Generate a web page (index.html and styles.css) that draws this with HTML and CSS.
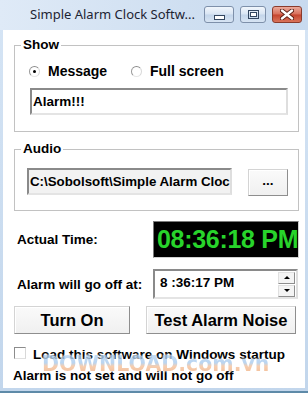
FILE: index.html
```html
<!DOCTYPE html>
<html>
<head>
<meta charset="utf-8">
<link rel="stylesheet" href="styles.css">
</head>
<body>
<div class="window">
  <div class="titlebar">
    <span class="title">Simple Alarm Clock Softw...</span>
    <div class="caption-btns">
      <span class="cbtn min"><svg width="11" height="5" viewBox="0 0 11 5"><rect x="0.5" y="0.5" width="10" height="4" fill="#fff" stroke="#33465f"/></svg></span>
      <span class="cbtn max"><svg width="11" height="9" viewBox="0 0 11 9"><rect x="0.5" y="0.5" width="10" height="8" fill="none" stroke="#33465f"/><rect x="2.5" y="2.5" width="6" height="4" fill="#fff" stroke="#33465f"/></svg></span>
      <span class="cbtn close"><svg width="14" height="11" viewBox="0 0 14 11"><path d="M2 1.5 L12 9.5 M12 1.5 L2 9.5" stroke="#5a1d12" stroke-width="4.2" stroke-linecap="round"/><path d="M2 1.5 L12 9.5 M12 1.5 L2 9.5" stroke="#fff" stroke-width="2.4" stroke-linecap="round"/></svg></span>
    </div>
  </div>
  <div class="client">
    <fieldset class="group show">
      <legend>Show</legend>
      <div class="group-body show-body">
        <div class="radios">
          <label class="radio first"><span class="dot on"></span>Message</label>
          <label class="radio"><span class="dot"></span>Full screen</label>
        </div>
        <div class="textbox msg">Alarm!!!</div>
      </div>
    </fieldset>
    <fieldset class="group audio">
      <legend>Audio</legend>
      <div class="group-body audio-body">
        <div class="textbox path">C:\Sobolsoft\Simple Alarm Cloc</div>
        <button class="btn browse">...</button>
      </div>
    </fieldset>
    <div class="time-row actual">
      <span class="label">Actual Time:</span>
      <div class="clock">08:36:18 PM</div>
    </div>
    <div class="time-row alarm">
      <span class="label">Alarm will go off at:</span>
      <div class="picker">
        <span class="ptext">8 :36:17 PM</span>
        <div class="spin">
          <span class="sbtn"><span class="tri up"></span></span>
          <span class="sbtn"><span class="tri down"></span></span>
        </div>
      </div>
    </div>
    <div class="btn-row">
      <button class="btn big turn">Turn On</button>
      <button class="btn big test">Test Alarm Noise</button>
    </div>
    <label class="check"><span class="box"></span>Load this software on Windows startup</label>
    <div class="status">Alarm is not set and will not go off</div>
    <div class="watermark">DOWNLOAD.com.vn</div>
  </div>
</div>
</body>
</html>
```

FILE: styles.css
```css
* { box-sizing: border-box; }
html, body { margin: 0; padding: 0; }
body {
  width: 308px;
  height: 393px;
  overflow: hidden;
  font-family: "Liberation Sans", Arial, sans-serif;
  font-weight: bold;
  font-size: 13.5px;
  color: #000;
}
.window {
  width: 308px;
  height: 393px;
  display: flex;
  flex-direction: column;
  background: linear-gradient(#d6e5f5, #c2d6ec);
  border-bottom: 2px solid #5e8aa8;
}
.titlebar {
  height: 30px;
  flex: none;
  display: flex;
  align-items: center;
  background: linear-gradient(90deg, #dfeaf7, #cfdff1 60%, #c8daef);
}
.title {
  font-family: "Noto Sans", "Open Sans", sans-serif;
  font-weight: normal;
  font-size: 13px;
  color: #1d2433;
  padding-left: 30px;
  padding-bottom: 2px;
}
.caption-btns {
  margin-left: auto;
  margin-right: 6px;
  display: flex;
  gap: 6px;
  align-self: flex-start;
  margin-top: 6px;
}
.cbtn {
  height: 17px;
  width: 30px;
  border: 1px solid #7e90aa;
  border-radius: 3px;
  display: flex;
  align-items: center;
  justify-content: center;
  background: linear-gradient(#f1f6fc, #d9e5f3 48%, #c3d5ea 52%, #d7e4f3);
}
.cbtn.min svg { margin-top: 6px; }
.cbtn.max { width: 26px; }
.cbtn.close {
  border-color: #8a3b2c;
  background: linear-gradient(#eba99a, #d86f5b 48%, #c5442e 52%, #d9735a);
}
.client {
  flex: 1;
  position: relative;
  background: #fff;
  margin: 0 3px 3px 3px;
  display: flex;
  flex-direction: column;
  overflow: hidden;
}
.group {
  margin: 0 6px 0 11px;
  padding: 0;
  border: 1px solid #c2c2c2;
  min-width: 0;
}
.group legend {
  margin-left: 6px;
  padding: 0 2px;
  line-height: 16px;
  font-size: 13.5px;
}
.show { margin-top: 7px; }
.audio { margin-top: 9px; }
.show-body { padding: 10px 10px 16px 14px; }
.radios {
  display: flex;
  align-items: center;
  height: 16px;
}
.radio {
  display: flex;
  align-items: center;
  gap: 8px;
  font-size: 14px;
}
.radio.first { width: 102px; }
.dot {
  width: 11px;
  height: 11px;
  border-radius: 50%;
  border: 1px solid;
  border-color: #8c8c8c #d8d8d8 #e6e6e6 #9a9a9a;
  background: #fff;
  position: relative;
  flex: none;
}
.dot.on::after {
  content: "";
  position: absolute;
  left: 3px;
  top: 3px;
  width: 3px;
  height: 3px;
  border-radius: 50%;
  background: #000;
}
.textbox {
  height: 27px;
  border: 2px solid;
  border-color: #8a8a8a #dedede #e4e4e4 #8a8a8a;
  display: flex;
  align-items: center;
  padding-left: 1px;
  white-space: nowrap;
  overflow: hidden;
}
.msg {
  margin-top: 9px;
  margin-left: 1px;
  background: #fff;
}
.audio-body {
  padding: 11px 10px 14px 12px;
  display: flex;
  align-items: flex-start;
}
.path {
  width: 205px;
  background: #f2f2f2;
  flex: none;
  font-size: 13.3px;
}
.btn {
  font-family: inherit;
  font-weight: bold;
  color: #000;
  padding: 0;
  margin: 0;
  background: linear-gradient(#fafafa, #f0f0f0);
  border: 1px solid;
  border-color: #d4d4d4 #8e8e8e #8e8e8e #d4d4d4;
  box-shadow: inset 1px 1px 0 #fff;
}
.browse {
  width: 40px;
  height: 27px;
  margin-left: 16px;
  margin-top: 1px;
  font-size: 13.5px;
  padding-bottom: 4px;
}
.time-row {
  display: flex;
  align-items: center;
  padding-left: 14px;
}
.actual { margin-top: 10px; height: 37px; margin-right: 6px; }
.alarm { margin-top: 11px; height: 30px; margin-right: 7px; }
.label { font-size: 13.5px; }
.clock {
  margin-left: auto;
  width: 146px;
  height: 37px;
  background: #000;
  border: 1px solid;
  border-color: #7a7a7a #d0d0d0 #d0d0d0 #7a7a7a;
  color: #28d42b;
  font-size: 25px;
  display: flex;
  align-items: center;
  padding-left: 3px;
  white-space: nowrap;
  letter-spacing: -0.3px;
}
.picker {
  margin-left: auto;
  width: 145px;
  height: 30px;
  border: 2px solid;
  border-color: #8a8a8a #dedede #e4e4e4 #8a8a8a;
  display: flex;
  align-items: center;
  padding-left: 5px;
}
.ptext { flex: 1; padding-bottom: 3px; }
.spin {
  display: flex;
  flex-direction: column;
  gap: 1px;
  margin-right: 1px;
}
.sbtn {
  width: 17px;
  height: 12px;
  border: 1px solid;
  border-color: #e0e0e0 #8e8e8e #8e8e8e #e0e0e0;
  background: #f4f4f4;
  display: flex;
  align-items: center;
  justify-content: center;
}
.tri {
  width: 0;
  height: 0;
  border-left: 3px solid transparent;
  border-right: 3px solid transparent;
}
.tri.up { border-bottom: 3px solid #000; }
.tri.down { border-top: 3px solid #000; }
.btn-row {
  display: flex;
  margin-top: 7px;
  padding-left: 11px;
  gap: 16px;
}
.big {
  height: 28px;
  font-size: 16.5px;
}
.turn { width: 116px; }
.test { width: 150px; }
.check {
  display: flex;
  align-items: center;
  gap: 7px;
  margin-top: 12px;
  padding-left: 11px;
  height: 16px;
  font-size: 13.5px;
}
.box {
  width: 12px;
  height: 12px;
  border: 1px solid;
  border-color: #8c8c8c #d8d8d8 #e0e0e0 #8c8c8c;
  background: #fff;
  margin-top: -2px;
}
.status {
  margin-top: 6px;
  padding-left: 10px;
  line-height: 16px;
  font-size: 13.5px;
}
.watermark {
  position: absolute;
  left: 39px;
  top: 323px;
  font-family: "DejaVu Sans", sans-serif;
  font-weight: bold;
  font-size: 20.5px;
  line-height: 22px;
  white-space: nowrap;
  color: transparent;
  background: linear-gradient(#b9d6f3 0%, #a9cbee 45%, #f4c29c 60%, #f0ab7c 100%);
  -webkit-background-clip: text;
  background-clip: text;
  filter: drop-shadow(0 0 1px #fff) drop-shadow(0 0 0.5px #fff);
  opacity: 0.8;
}
```
